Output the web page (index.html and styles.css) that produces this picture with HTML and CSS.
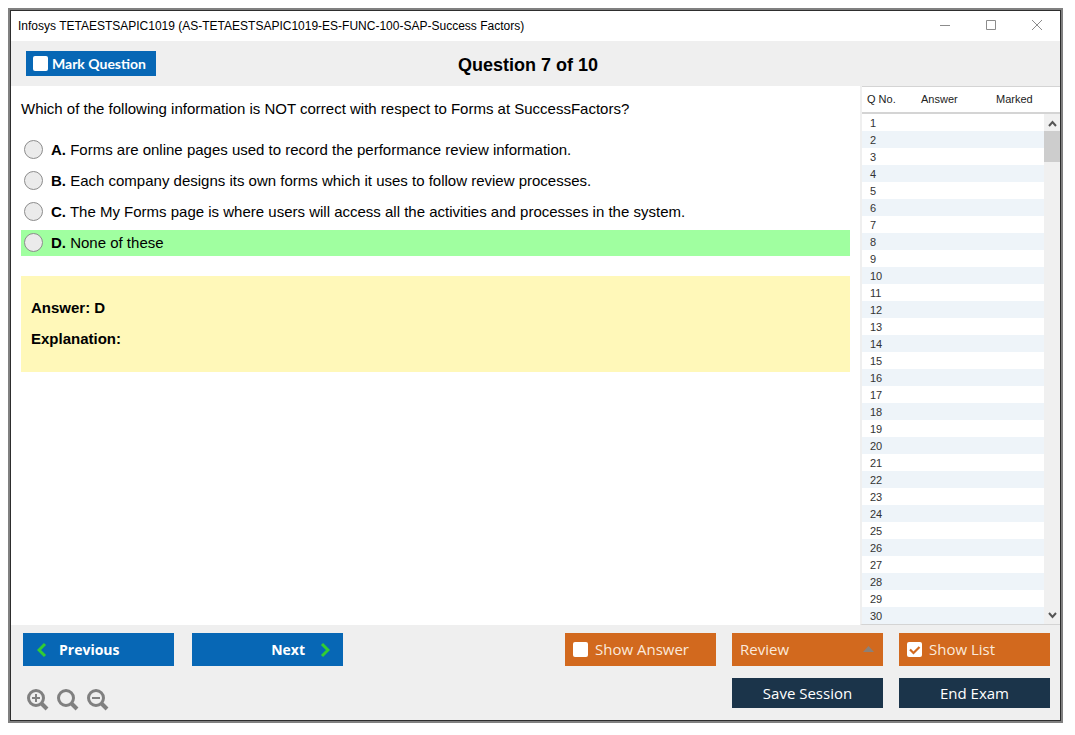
FILE: index.html
```html
<!DOCTYPE html>
<html lang="en">
<head>
  <meta charset="UTF-8" />
  <meta name="viewport" content="width=device-width, initial-scale=1.0" />
  <title>Infosys TETAESTSAPIC1019</title>
  <link rel="stylesheet" href="styles.css">
</head>
<body>
  <div class="window">
    <!-- Title bar -->
    <div class="titlebar">
      <span class="titlebar-text">Infosys TETAESTSAPIC1019 (AS-TETAESTSAPIC1019-ES-FUNC-100-SAP-Success Factors)</span>
      <div class="window-controls">
        <button class="control-btn" aria-label="Minimize">
          <svg width="12" height="12" viewBox="0 0 12 12"><path d="M1 6.5h10" /></svg>
        </button>
        <button class="control-btn" aria-label="Maximize">
          <svg width="12" height="12" viewBox="0 0 12 12"><path d="M1.5 1.5h9v9h-9z" /></svg>
        </button>
        <button class="control-btn" aria-label="Close">
          <svg width="12" height="12" viewBox="0 0 12 12"><path d="M1 1l10 10M11 1L1 11" /></svg>
        </button>
      </div>
    </div>

    <div class="header">
      <label class="mark-btn"><input type="checkbox" class="check" />Mark Question</label>
      <h1>Question 7 of 10</h1>
    </div>

    <div class="main">
      <!-- Question -->
      <div class="question">
        <p class="question-text">Which of the following information is NOT correct with respect to Forms at SuccessFactors?</p>
        <div class="options">
          <label class="option"><input type="radio" name="answer" /><span><b>A.</b> Forms are online pages used to record the performance review information.</span></label>
          <label class="option"><input type="radio" name="answer" /><span><b>B.</b> Each company designs its own forms which it uses to follow review processes.</span></label>
          <label class="option"><input type="radio" name="answer" /><span><b>C.</b> The My Forms page is where users will access all the activities and processes in the system.</span></label>
          <label class="option correct"><input type="radio" name="answer" /><span><b>D.</b> None of these</span></label>
        </div>
        <div class="answer-box">
          <p>Answer: D</p>
          <p>Explanation:</p>
        </div>
      </div>

      <!-- Question list -->
      <div class="list">
        <div class="list-table">
          <table>
            <thead>
              <tr><th class="col-no">Q No.</th><th class="col-answer">Answer</th><th>Marked</th></tr>
            </thead>
            <tbody>
              <tr><td>1</td><td></td><td></td></tr>
              <tr><td>2</td><td></td><td></td></tr>
              <tr><td>3</td><td></td><td></td></tr>
              <tr><td>4</td><td></td><td></td></tr>
              <tr><td>5</td><td></td><td></td></tr>
              <tr><td>6</td><td></td><td></td></tr>
              <tr><td>7</td><td></td><td></td></tr>
              <tr><td>8</td><td></td><td></td></tr>
              <tr><td>9</td><td></td><td></td></tr>
              <tr><td>10</td><td></td><td></td></tr>
              <tr><td>11</td><td></td><td></td></tr>
              <tr><td>12</td><td></td><td></td></tr>
              <tr><td>13</td><td></td><td></td></tr>
              <tr><td>14</td><td></td><td></td></tr>
              <tr><td>15</td><td></td><td></td></tr>
              <tr><td>16</td><td></td><td></td></tr>
              <tr><td>17</td><td></td><td></td></tr>
              <tr><td>18</td><td></td><td></td></tr>
              <tr><td>19</td><td></td><td></td></tr>
              <tr><td>20</td><td></td><td></td></tr>
              <tr><td>21</td><td></td><td></td></tr>
              <tr><td>22</td><td></td><td></td></tr>
              <tr><td>23</td><td></td><td></td></tr>
              <tr><td>24</td><td></td><td></td></tr>
              <tr><td>25</td><td></td><td></td></tr>
              <tr><td>26</td><td></td><td></td></tr>
              <tr><td>27</td><td></td><td></td></tr>
              <tr><td>28</td><td></td><td></td></tr>
              <tr><td>29</td><td></td><td></td></tr>
              <tr><td>30</td><td></td><td></td></tr>
            </tbody>
          </table>
        </div>
        <div class="scroll-col">
          <div class="scroll-head"></div>
          <div class="scrollbar">
            <svg width="9" height="17" viewBox="0 0 9 17"><path d="M1 12l3.500-4 3.500 4" /></svg>
            <div class="thumb"></div>
            <svg width="9" height="17" viewBox="0 0 9 17"><path d="M1 6l3.500 4 3.500-4" /></svg>
          </div>
        </div>
      </div>
    </div>

    <!-- Footer -->
    <div class="footer">
      <div class="footer-left">
        <div class="nav-buttons">
          <button class="btn blue prev">
            <svg width="10" height="16" viewBox="0 0 10 16"><path d="M8 2L2 8l6 6" /></svg>
            Previous
          </button>
          <button class="btn blue next">
            Next
            <svg width="10" height="16" viewBox="0 0 10 16"><path d="M2 2l6 6-6 6" /></svg>
          </button>
        </div>
        <div class="zoom-buttons">
          <button class="zoom-btn" aria-label="Zoom in">
            <svg width="22" height="22" viewBox="0 0 22 22"><circle cx="9" cy="9" r="7.500" /><path d="M14 14l6 6" class="handle" /><path d="M5 9h8M9 5v8" class="sign" /></svg>
          </button>
          <button class="zoom-btn" aria-label="Reset zoom">
            <svg width="22" height="22" viewBox="0 0 22 22"><circle cx="9" cy="9" r="7.500" /><path d="M14 14l6 6" class="handle" /></svg>
          </button>
          <button class="zoom-btn" aria-label="Zoom out">
            <svg width="22" height="22" viewBox="0 0 22 22"><circle cx="9" cy="9" r="7.500" /><path d="M14 14l6 6" class="handle" /><path d="M5 9h8" class="sign" /></svg>
          </button>
        </div>
      </div>
      <div class="footer-right">
        <label class="btn orange"><input type="checkbox" class="check" />Show Answer</label>
        <div class="review">
          <select class="btn orange" aria-label="Review">
            <option>Review</option>
          </select>
          <svg width="11" height="6" viewBox="0 0 11 6"><path d="M0 6l5.500-6L11 6z" /></svg>
        </div>
        <label class="btn orange"><input type="checkbox" class="check" checked />Show List</label>
        <button class="btn dark save">Save Session</button>
        <button class="btn dark">End Exam</button>
      </div>
    </div>
  </div>
</body>
</html>
```
FILE: styles.css
```css
* {
  box-sizing: border-box;
}

body {
  margin: 0;
  padding: 10px 14px 14px 10px;
  height: 100vh;
  background: white;
  font-family: "Liberation Sans", Arial, sans-serif;
  font-size: 15px;
  color: black;
}

h1,
p {
  margin: 0;
}

button,
select {
  border: none;
  padding: 0;
  background: none;
  font: inherit;
  color: inherit;
  cursor: pointer;
}

svg {
  display: block;
  fill: none;
}

/* Window Frame */
.window {
  display: flex;
  flex-direction: column;
  height: 100%;
  border: 1px solid #2e2e2e;
  box-shadow: 0 0 0 2px #808080;
  background: #efefef;
}

/* Title Bar */
.titlebar {
  display: flex;
  justify-content: space-between;
  align-items: center;
  height: 30px;
  flex: none;
  padding-left: 7px;
  background: white;
}

.titlebar-text {
  font-size: 12px;
}

.window-controls {
  display: flex;
}

.control-btn {
  display: flex;
  justify-content: center;
  align-items: center;
  width: 46px;
  height: 30px;
  padding-bottom: 2px;
}

.control-btn svg {
  stroke: #8c8c8c;
}

/* Header */
.header {
  display: grid;
  grid-template-columns: 1fr auto 1fr;
  align-items: end;
  height: 45px;
  flex: none;
  padding: 0 30px 10px 15px;
}

.mark-btn {
  display: flex;
  align-items: center;
  justify-self: start;
  gap: 4px;
  width: 130px;
  height: 25px;
  padding-left: 7px;
  background: #0767b5;
  color: white;
  font-family: Lato, sans-serif;
  font-size: 14px;
  font-weight: bold;
}

h1 {
  font-size: 18px;
}

.check {
  appearance: none;
  flex: none;
  width: 15px;
  height: 15px;
  margin: 0;
  border-radius: 2px;
  background: white;
}

.check:checked {
  background: white url("data:image/svg+xml,%3Csvg xmlns='http://www.w3.org/2000/svg' viewBox='0 0 15 15'%3E%3Cpath d='M3 7.5l3.500 3.500L12.500 5' fill='none' stroke='%23d2691e' stroke-width='2.200'/%3E%3C/svg%3E");
}

/* Question */
.main {
  display: flex;
  flex: 1;
  min-height: 0;
  background: white;
}

.question {
  flex: 1;
  padding: 14px 10px;
}

.question-text {
  line-height: 18px;
}

.options {
  display: flex;
  flex-direction: column;
  gap: 5px;
  margin: 19px 0 20px;
}

.option {
  display: flex;
  align-items: center;
  gap: 8px;
  height: 26px;
  padding: 0 0 2px 3px;
}

.option.correct {
  background: #a0ffa0;
}

.option input {
  appearance: none;
  width: 19px;
  height: 19px;
  margin: 0;
  border: 1px solid #8c8c8c;
  border-radius: 50%;
  background: #ebebeb;
}

.answer-box {
  padding: 16px 10px 18px;
  background: #fff8b9;
  font-weight: bold;
  line-height: 31px;
}

/* Question List */
.list {
  display: flex;
  width: 200px;
  border-left: 2px solid #efefef;
  border-bottom: 1px solid #d4d4d4;
  font-size: 11px;
  color: #333;
}

.list-table {
  flex: 1;
  overflow: hidden;
}

table {
  width: 100%;
  border-collapse: separate;
  border-spacing: 0;
  table-layout: fixed;
}

th {
  height: 28px;
  padding: 0 0 2px 5px;
  border-top: 1px solid #d4d4d4;
  border-bottom: 2px solid #d4d4d4;
  text-align: left;
  font-weight: normal;
  color: #222;
}

.col-no {
  width: 54px;
}

.col-answer {
  width: 75px;
}

td {
  height: 17px;
  padding: 2px 0 0 8px;
  line-height: 15px;
}

tbody tr:nth-child(even) {
  background: #eef4f9;
}

.scroll-col {
  display: flex;
  flex-direction: column;
  width: 16px;
}

.scroll-head {
  height: 28px;
  border-top: 1px solid #d4d4d4;
  border-bottom: 2px solid #d4d4d4;
}

.scrollbar {
  display: flex;
  flex: 1;
  flex-direction: column;
  align-items: center;
  background: #f0f0f0;
}

.scrollbar svg {
  stroke: #555;
  stroke-width: 2;
}

.thumb {
  width: 100%;
  height: 31px;
  margin-bottom: auto;
  background: #cdcdcd;
}

/* Footer */
.footer {
  display: flex;
  justify-content: space-between;
  flex: none;
  height: 95px;
  padding: 8px 10px 0 12px;
}

.nav-buttons {
  display: flex;
  gap: 18px;
}

.btn {
  display: flex;
  align-items: center;
  width: 151px;
  height: 33px;
  color: white;
  font-family: "Open Sans", sans-serif;
  font-size: 15px;
}

.blue {
  background: #0767b5;
  font-size: 14px;
  font-weight: bold;
}

.blue svg {
  stroke: #32cd32;
  stroke-width: 3;
}

.prev {
  gap: 12px;
  padding-left: 14px;
}

.next {
  justify-content: flex-end;
  gap: 15px;
  padding-right: 13px;
}

.orange {
  gap: 7px;
  padding: 0 0 1px 8px;
  background: #d2691e;
  color: #fbe9dc;
}

.dark {
  justify-content: center;
  height: 30px;
  background: #1b344a;
}

.zoom-buttons {
  display: flex;
  gap: 8px;
  padding: 23px 0 0 4px;
}

.zoom-btn svg {
  stroke: #808080;
  stroke-width: 3;
}

.zoom-btn .handle {
  stroke-width: 4;
}

.zoom-btn .sign {
  stroke-width: 2;
}

.footer-right {
  display: grid;
  grid-template-columns: repeat(3, 151px);
  align-content: start;
  gap: 12px 16px;
}

.review {
  position: relative;
}

.review select {
  appearance: none;
}

.review svg {
  position: absolute;
  top: 13px;
  right: 9px;
  fill: #8c8078;
  pointer-events: none;
}

.save {
  grid-column: 2;
}
```
